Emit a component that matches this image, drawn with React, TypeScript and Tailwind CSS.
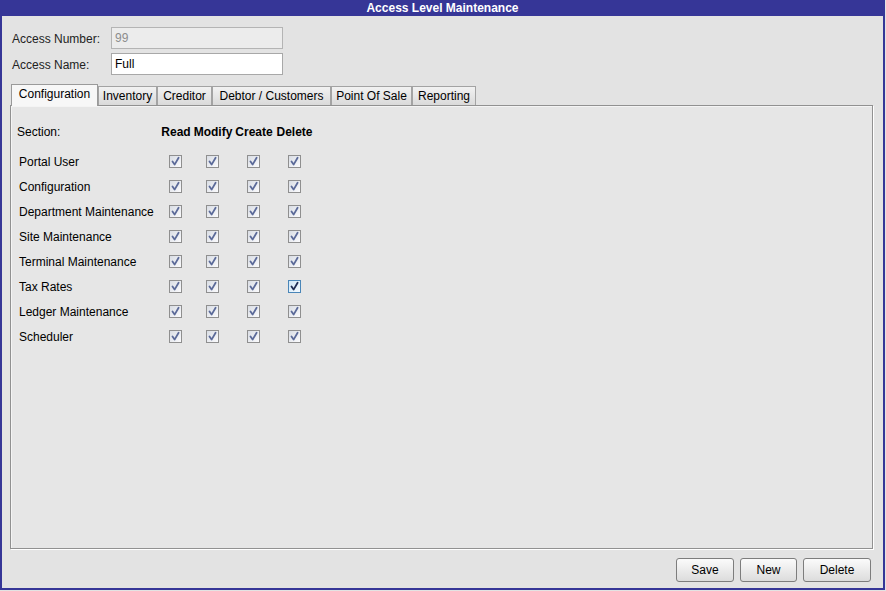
import React from "react";

const rows = [
  "Portal User",
  "Configuration",
  "Department Maintenance",
  "Site Maintenance",
  "Terminal Maintenance",
  "Tax Rates",
  "Ledger Maintenance",
  "Scheduler",
];

function Check({ active = false }: { active?: boolean }) {
  return (
    <div
      className={
        active
          ? "w-[13px] h-[13px] border border-[#4a86b8] bg-gradient-to-br from-[#cfe6f7] to-[#f4faff] flex items-center justify-center"
          : "w-[13px] h-[13px] border border-[#8f8f8f] bg-gradient-to-br from-[#d9dde4] to-[#fbfbfd] flex items-center justify-center"
      }
    >
      <svg width="11" height="11" viewBox="0 0 11 11">
        <path
          d="M2.5 5.5 L4.6 8.6 L8.6 1.8"
          fill="none"
          stroke={active ? "#1f2d55" : "#5b6a99"}
          strokeWidth="1.8"
          strokeLinecap="round"
          strokeLinejoin="round"
        />
      </svg>
    </div>
  );
}

const tabs = [
  { label: "Inventory", w: "w-[59px]" },
  { label: "Creditor", w: "w-[55px]" },
  { label: "Debtor / Customers", w: "w-[119px]" },
  { label: "Point Of Sale", w: "w-[81px]" },
  { label: "Reporting", w: "w-[64px]" },
];

export default function App() {
  return (
    <div
      className="w-[886px] h-[591px] bg-[#e3e3e3] text-[12px] text-black overflow-hidden"
      style={{ fontFamily: '"Liberation Sans", Arial, sans-serif' }}
    >
      <div className="w-[885px] h-[590px] flex flex-col border-x-2 border-b-2 border-[#363697] bg-[#e3e3e3]">
        <div className="h-[16px] bg-[#363697] text-white font-bold flex items-center justify-center leading-none pb-[1px]">
          Access Level Maintenance
        </div>

        <div className="flex flex-col pl-[10px] pt-[11px] gap-[4px]">
          <div className="flex items-center h-[22px]">
            <div className="w-[99px] text-[#222] pt-[1px]">Access Number:</div>
            <div className="w-[172px] h-[22px] border border-[#b4b4b4] bg-[#ececec] flex items-center pl-[3px] text-[#8c8c8c]">
              99
            </div>
          </div>
          <div className="flex items-center h-[22px]">
            <div className="w-[99px] text-[#222] pt-[1px]">Access Name:</div>
            <div className="w-[172px] h-[22px] border border-[#a8a8a8] bg-white flex items-center pl-[3px]">
              Full
            </div>
          </div>
        </div>

        <div className="flex items-end pl-[9px] mt-[8px] h-[22px]">
          <div className="w-[87px] h-[22px] border border-b-0 border-[#9a9a9a] bg-[#f7f7f7] flex items-center justify-center relative z-10 -mb-[1px] pb-[3px]">
            Configuration
          </div>
          {tabs.map((t) => (
            <div
              key={t.label}
              className={`${t.w} h-[19px] border border-b-0 border-[#a3a3a3] bg-gradient-to-b from-[#f2f2f2] to-[#dadada] flex items-center justify-center`}
            >
              {t.label}
            </div>
          ))}
        </div>

        <div className="ml-[8px] mr-[10px] h-[444px] border border-[#919191] shadow-[1px_1px_0_#ffffff] bg-[#e6e6e6]">
          <div className="h-full border-l border-t border-[#f4f4f4] pl-[5px] pt-[12px]">
            <div className="grid grid-cols-[141px_30px_38px_38px_37px] gap-x-[3px]">
              <div className="h-[25px] flex items-center">Section:</div>
              <div className="h-[25px] flex items-center justify-center font-bold">Read</div>
              <div className="h-[25px] flex items-center justify-center font-bold">Modify</div>
              <div className="h-[25px] flex items-center justify-center font-bold">Create</div>
              <div className="h-[25px] flex items-center justify-center font-bold">Delete</div>
              <div className="h-[5px] col-span-5" />
              {rows.map((r) => (
                <React.Fragment key={r}>
                  <div className="h-[25px] flex items-center pl-[2px]">{r}</div>
                  <div className="h-[25px] flex items-center justify-center pr-[1px]">
                    <Check />
                  </div>
                  <div className="h-[25px] flex items-center justify-center pr-[1px]">
                    <Check />
                  </div>
                  <div className="h-[25px] flex items-center justify-center pr-[1px]">
                    <Check />
                  </div>
                  <div className="h-[25px] flex items-center justify-center">
                    <Check active={r === "Tax Rates"} />
                  </div>
                </React.Fragment>
              ))}
            </div>
          </div>
        </div>

        <div className="flex justify-end gap-[6px] mt-[9px] pr-[12px]">
          <button className="w-[58px] h-[24px] rounded-[3px] border border-[#7d7d7d] bg-gradient-to-b from-[#fbfbfb] to-[#dcdcdc] text-[12px]">
            Save
          </button>
          <button className="w-[57px] h-[24px] rounded-[3px] border border-[#7d7d7d] bg-gradient-to-b from-[#fbfbfb] to-[#dcdcdc] text-[12px]">
            New
          </button>
          <button className="w-[68px] h-[24px] rounded-[3px] border border-[#7d7d7d] bg-gradient-to-b from-[#fbfbfb] to-[#dcdcdc] text-[12px]">
            Delete
          </button>
        </div>
      </div>
    </div>
  );
}
